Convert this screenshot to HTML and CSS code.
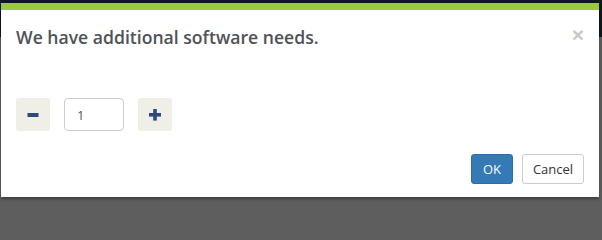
FILE: index.html
```html
<!DOCTYPE html>
<html>
<head>
<meta charset="utf-8">
<link rel="stylesheet" href="styles.css">
</head>
<body>
<div class="backdrop">
<div class="modal">
  <div class="modal-header">
    <h4 class="modal-title">We have additional software needs.</h4>
    <span class="close">×</span>
  </div>
  <div class="modal-body">
    <div class="stepper">
      <button class="step-btn" type="button" aria-label="decrease">
        <svg width="12" height="12" viewBox="0 0 12 12"><rect x="0.5" y="4" width="11" height="4" fill="#2b4a7d"/></svg>
      </button>
      <input class="qty" type="text" value="1">
      <button class="step-btn" type="button" aria-label="increase">
        <svg width="12" height="12" viewBox="0 0 12 12"><rect x="0" y="4" width="12" height="3.6" fill="#2b4a7d"/><rect x="4.2" y="0" width="3.6" height="11.6" fill="#2b4a7d"/></svg>
      </button>
    </div>
  </div>
  <div class="modal-footer">
    <button class="btn btn-primary" type="button">OK</button>
    <button class="btn btn-default" type="button">Cancel</button>
  </div>
</div>
</div>
</body>
</html>
```

FILE: styles.css
```css
html {
  background: #5e5e5e;
}
html, body {
  margin: 0;
  padding: 0;
}
.backdrop {
  width: 602px;
  height: 206px;
  overflow: hidden;
  background: linear-gradient(#0e1620 0, #0e1620 37px, #5e5e5e 37px, #5e5e5e 100%);
  font-family: "Open Sans", "Liberation Sans", sans-serif;
  padding-top: 3px;
  padding-left: 1px;
  box-sizing: border-box;
}
.modal {
  width: 598px;
  height: 194px;
  box-sizing: border-box;
  background: #fff;
  border-top: 7px solid #9aca3c;
  box-shadow: 0 2px 3px rgba(0,0,0,0.35);
  display: flex;
  flex-direction: column;
}
.modal-header {
  display: flex;
  justify-content: space-between;
  align-items: flex-start;
  padding: 14px 15px 0 15px;
  height: 26px;
}
.modal-title {
  margin: 0;
  font-size: 17.6px;
  font-weight: 600;
  color: #4f5256;
  line-height: 26px;
}
.close {
  font-family: "Liberation Sans", sans-serif;
  font-size: 21px;
  font-weight: 700;
  color: #c8c8c8;
  line-height: 22px;
  margin-top: 0;
  margin-right: 0;
}
.modal-body {
  padding: 48px 15px 0 15px;
}
.stepper {
  display: flex;
  align-items: center;
  gap: 14px;
}
.step-btn {
  width: 34px;
  height: 33px;
  border: none;
  border-radius: 3px;
  background: #f0efe7;
  padding: 0;
  display: flex;
  align-items: center;
  justify-content: center;
}
.qty {
  width: 60px;
  height: 33px;
  box-sizing: border-box;
  border: 1px solid #cccccc;
  border-radius: 4px;
  padding: 0 12px;
  font-family: "Open Sans", sans-serif;
  font-size: 13px;
  color: #555;
  outline: none;
}
.modal-footer {
  margin-top: auto;
  display: flex;
  justify-content: flex-end;
  gap: 9px;
  padding: 0 15px 13px 15px;
}
.btn {
  height: 30px;
  border-radius: 3px;
  font-family: "Open Sans", sans-serif;
  font-size: 13px;
  padding: 0;
  cursor: pointer;
}
.btn-primary {
  background: #337ab7;
  border: 1px solid #2e6da4;
  color: #fff;
  width: 42px;
}
.btn-default {
  background: #fff;
  border: 1px solid #cccccc;
  color: #333;
  width: 62px;
}
```
